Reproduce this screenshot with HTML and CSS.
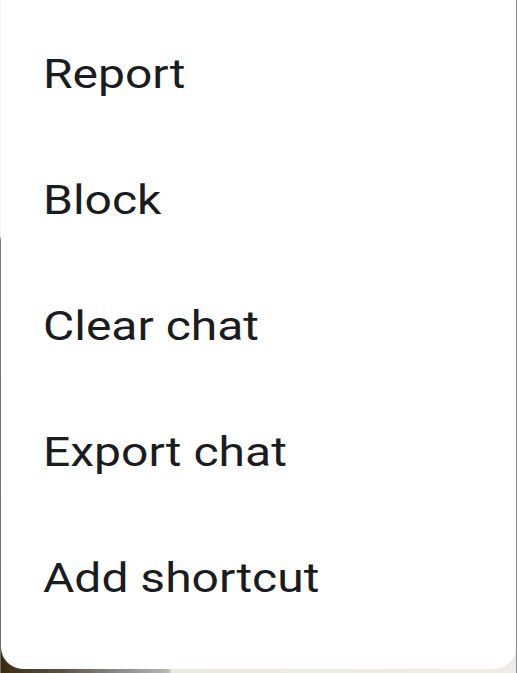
FILE: index.html
```html
<!DOCTYPE html>
<html>
<head>
<meta charset="utf-8">
<link rel="stylesheet" href="styles.css">
</head>
<body>
<div class="screen">
  <div class="menu">
    <div class="item"><span class="label">Report</span></div>
    <div class="item"><span class="label">Block</span></div>
    <div class="item"><span class="label">Clear chat</span></div>
    <div class="item"><span class="label">Export chat</span></div>
    <div class="item"><span class="label">Add shortcut</span></div>
  </div>
</div>
</body>
</html>
```
FILE: styles.css
```css
html, body {
  margin: 0;
  padding: 0;
}
body {
  width: 517px;
  height: 673px;
  overflow: hidden;
  background: linear-gradient(to right, #3a2b0e 0px, #5b5141 60px, #8c8c8c 120px, #b9b7b2 168px, #ece9e3 172px, #efece6 517px);
}
.screen {
  height: 673px;
  box-sizing: border-box;
  padding: 0 1px;
  background:
    linear-gradient(to bottom, #f4f2ee 0px, #f4f2ee 236px, #7a7a7a 240px, #6e6e6e 673px) left top / 1px 673px no-repeat,
    linear-gradient(#8a8a8a, #8a8a8a) right top / 1px 673px no-repeat;
}
.menu {
  height: 669px;
  box-sizing: border-box;
  background: #ffffff;
  border-radius: 0 0 22px 22px;
  padding: 12px 0 27px;
  display: flex;
  flex-direction: column;
  font-family: Roboto, "Noto Sans", sans-serif;
  color: #1b1c1f;
}
.item {
  height: 126px;
  display: flex;
  align-items: center;
  padding-left: 42px;
}
.label {
  display: inline-block;
  font-size: 40px;
  line-height: 46px;
  transform: scaleX(1.2);
  transform-origin: left center;
  white-space: nowrap;
}
```
